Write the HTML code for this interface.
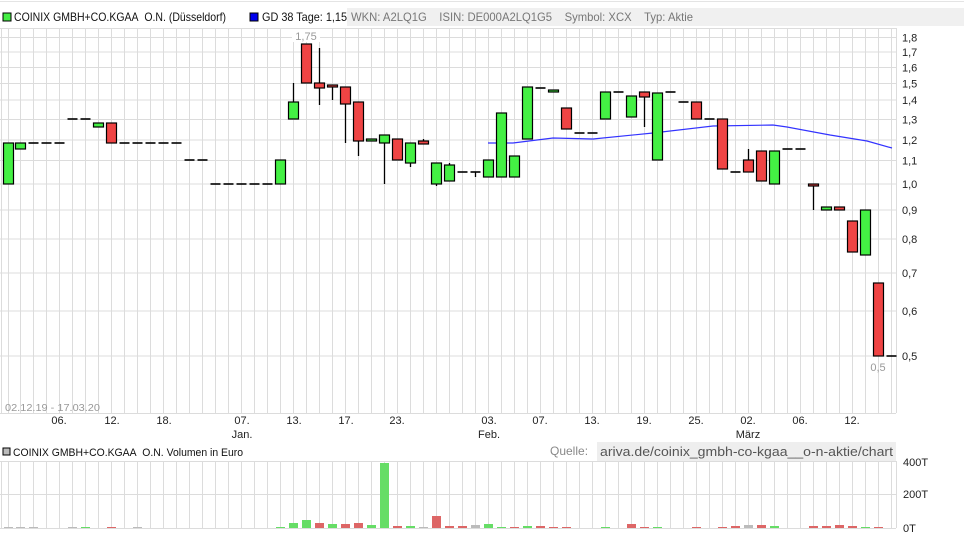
<!DOCTYPE html>
<html><head><meta charset="utf-8"><style>
body{margin:0;width:964px;height:535px;background:#fff;overflow:hidden;font-family:"Liberation Sans",Arial,sans-serif;}
svg{position:absolute;left:0;top:0}
</style></head><body>
<svg id="s" width="964" height="535" xmlns="http://www.w3.org/2000/svg" font-family="Liberation Sans, Arial, sans-serif">
<line x1="0" y1="1.5" x2="964" y2="1.5" stroke="#e4e4e4"/>
<rect x="3" y="13" width="8" height="8" fill="#44ee44" stroke="#000"/>
<text x="14" y="21" font-size="12" fill="#111" textLength="212" lengthAdjust="spacingAndGlyphs">COINIX GMBH+CO.KGAA&#160;&#160;O.N. (Düsseldorf)</text>
<rect x="250" y="13" width="8" height="8" fill="#0000ee" stroke="#000"/>
<text x="262" y="21" font-size="12" fill="#111" textLength="85" lengthAdjust="spacingAndGlyphs">GD 38 Tage: 1,15</text>
<rect x="347" y="8" width="617" height="18" fill="#f0f0f0"/>
<text x="351" y="21" font-size="12" fill="#777" textLength="342" lengthAdjust="spacingAndGlyphs">WKN: A2LQ1G&#160;&#160;&#160;&#160;ISIN: DE000A2LQ1G5&#160;&#160;&#160;&#160;Symbol: XCX&#160;&#160;&#160;&#160;Typ: Aktie</text>
<g id="grid" stroke="#dcdcdc" stroke-width="1"></g>
<g id="ax" font-size="11" fill="#222"></g>
<polyline points="488,143 513,143 553,138 593,139 653,133 713,126 773,125 787,127 830,135 867,141 892,148" fill="none" stroke="#3333ff" stroke-width="1.2"/>
<g id="c"></g>
<rect x="292" y="29" width="28" height="13" fill="#fff"/>
<text x="306" y="40" font-size="11" fill="#999" text-anchor="middle">1,75</text>
<text x="878" y="371" font-size="11" fill="#999" text-anchor="middle">0,5</text>
<text x="5" y="411" font-size="10" fill="#999" textLength="95" lengthAdjust="spacingAndGlyphs">02.12.19 - 17.03.20</text>
<rect x="3" y="448" width="7" height="7" fill="#bbb" stroke="#000"/>
<text x="13" y="456" font-size="11" fill="#111" textLength="230" lengthAdjust="spacingAndGlyphs">COINIX GMBH+CO.KGAA&#160;&#160;O.N. Volumen in Euro</text>
<text x="550" y="455" font-size="12" fill="#888">Quelle:</text>
<rect x="597" y="442" width="299" height="19" fill="#eeeeee"/>
<text x="600" y="456" font-size="13" fill="#555" textLength="293" lengthAdjust="spacingAndGlyphs">ariva.de/coinix_gmbh-co-kgaa__o-n-aktie/chart</text>
<g id="v"></g>
</svg>
<script>
var NS="http://www.w3.org/2000/svg";
function el(p,t,a,txt){var e=document.createElementNS(NS,t);for(var k in a)e.setAttribute(k,a[k]);if(txt)e.textContent=txt;document.getElementById(p).appendChild(e);return e;}
function X(i){return 7.5+12.99*i;}
for(var i=0;i<=68;i++){var x=Math.round(X(i))+0.5;el("grid","line",{x1:x,y1:28,x2:x,y2:413});el("grid","line",{x1:x,y1:461,x2:x,y2:528});}
el("grid","line",{x1:1.5,y1:28,x2:1.5,y2:413});el("grid","line",{x1:1.5,y1:461,x2:1.5,y2:528});
el("grid","line",{x1:896.5,y1:28,x2:896.5,y2:413});el("grid","line",{x1:896.5,y1:461,x2:896.5,y2:528});
var lv=[[1.8,37.5],[1.7,52],[1.6,67.5],[1.5,83.5],[1.4,100],[1.3,119.5],[1.2,140],[1.1,160.5],[1.0,184],[0.9,210],[0.8,239],[0.7,273],[0.6,311],[0.5,356]];
el("grid","line",{x1:0,y1:28.5,x2:896,y2:28.5});el("grid","line",{x1:0,y1:413.5,x2:896,y2:413.5});
lv.forEach(function(l){el("grid","line",{x1:0,y1:l[1],x2:896,y2:l[1]});el("ax","text",{x:902,y:l[1]+4},l[0].toFixed(1).replace(".",","));});
[461.5,494.5,528.5].forEach(function(y){el("grid","line",{x1:0,y1:y,x2:896,y2:y});});
el("ax","text",{x:903,y:466},"400T");el("ax","text",{x:903,y:498},"200T");el("ax","text",{x:903,y:532},"0T");
var xl=[[59,"06."],[112,"12."],[164,"18."],[242,"07."],[294,"13."],[346,"17."],[397,"23."],[489,"03."],[540,"07."],[592,"13."],[644,"19."],[696,"25."],[748,"02."],[800,"06."],[852,"12."]];
xl.forEach(function(l){el("ax","text",{x:l[0],y:424,"text-anchor":"middle"},l[1]);});
el("ax","text",{x:242,y:438,"text-anchor":"middle"},"Jan.");el("ax","text",{x:489,y:438,"text-anchor":"middle"},"Feb.");el("ax","text",{x:748,y:438,"text-anchor":"middle"},"März");
var C=[[0,"g",143,184],[1,"g",143,149],[2,"d",143],[3,"d",143],[4,"d",143],[5,"d",119],[6,"d",119],[7,"g",123,127],[8,"r",123,143],
[9,"d",143],[10,"d",143],[11,"d",143],[12,"d",143],[13,"d",143],[14,"d",160],[15,"d",160],[16,"d",184],[17,"d",184],[18,"d",184],[19,"d",184],[20,"d",184],
[21,"g",160,184],[22,"g",102,119,83,102],[23,"r",44,83],[24,"r",83,88,48,105],[25,"r",85,87,85,100],[26,"r",87,104,87,143],[27,"r",102,141,102,156],
[28,"g",139,141],[29,"g",135,143,135,184],[30,"r",139,160],[31,"g",143,163,143,167],[32,"r",141,144,139,144],[33,"g",163,184,163,186],[34,"g",165,181,163,165],
[35,"d",172],[36,"d",172,0,172,177],[37,"g",160,177],[38,"g",113,177],[39,"g",156,177],[40,"g",87,139],[41,"d",88],[42,"g",90,92],[43,"r",108,129],[44,"d",133],[45,"d",133],
[46,"g",92,119],[47,"d",92],[48,"g",96,117],[49,"r",92,97,92,127],[50,"g",93,160],[51,"d",92],[52,"d",102],[53,"r",102,119],[54,"d",119],[55,"r",119,169],[56,"d",172],
[57,"r",160,172,149,160],[58,"r",151,181],[59,"g",151,184],[60,"d",149],[61,"d",149],[62,"r",184,186,184,210],[63,"g",207,210],[64,"r",207,210],[65,"r",221,252],[66,"g",210,255],[67,"r",283,356],[68,"d",356]];
C.forEach(function(c){var x=Math.round(X(c[0]))+0.5;
 if(c[4]!==undefined)el("c","line",{x1:x,y1:c[4],x2:x,y2:c[5],stroke:"#000","stroke-width":1.3});
 if(c[1]=="d"){el("c","line",{x1:x-5,y1:c[2],x2:x+5,y2:c[2],stroke:"#000","stroke-width":1.6});}
 else{el("c","rect",{x:x-5,y:c[2],width:10,height:Math.max(c[3]-c[2],2),fill:c[1]=="g"?"#44f044":"#ef4444",stroke:"#000","stroke-width":1.2});}
});
var V={0:[1,"#bbb"],1:[1,"#bbb"],2:[1,"#bbb"],5:[1,"#bbb"],6:[1,"#66dd66"],8:[1,"#dd6666"],10:[1,"#bbb"],21:[1,"#66dd66"],22:[5,"#66dd66"],23:[8,"#66dd66"],24:[5,"#dd6666"],25:[4,"#66dd66"],26:[4,"#dd6666"],27:[5,"#dd6666"],28:[3,"#66dd66"],29:[65,"#66dd66"],30:[2,"#dd6666"],31:[2,"#66dd66"],32:[1,"#bbb"],33:[12,"#dd6666"],34:[2,"#dd6666"],35:[2,"#dd6666"],36:[3,"#bbb"],37:[4,"#66dd66"],38:[1,"#66dd66"],39:[1,"#dd6666"],40:[2,"#66dd66"],41:[2,"#dd6666"],42:[1,"#dd6666"],43:[1,"#dd6666"],46:[1,"#66dd66"],48:[4,"#dd6666"],49:[1,"#dd6666"],50:[1,"#66dd66"],53:[1,"#dd6666"],55:[1,"#dd6666"],56:[2,"#dd6666"],57:[3,"#bbb"],58:[3,"#dd6666"],59:[2,"#66dd66"],62:[2,"#dd6666"],63:[2,"#dd6666"],64:[3,"#dd6666"],65:[2,"#dd6666"],66:[1,"#66dd66"],67:[1,"#dd6666"]};
for(var k in V){var x=Math.round(X(+k))-4;el("v","rect",{x:x,y:528-V[k][0],width:9,height:V[k][0],fill:V[k][1]});}
</script>
</body></html>
